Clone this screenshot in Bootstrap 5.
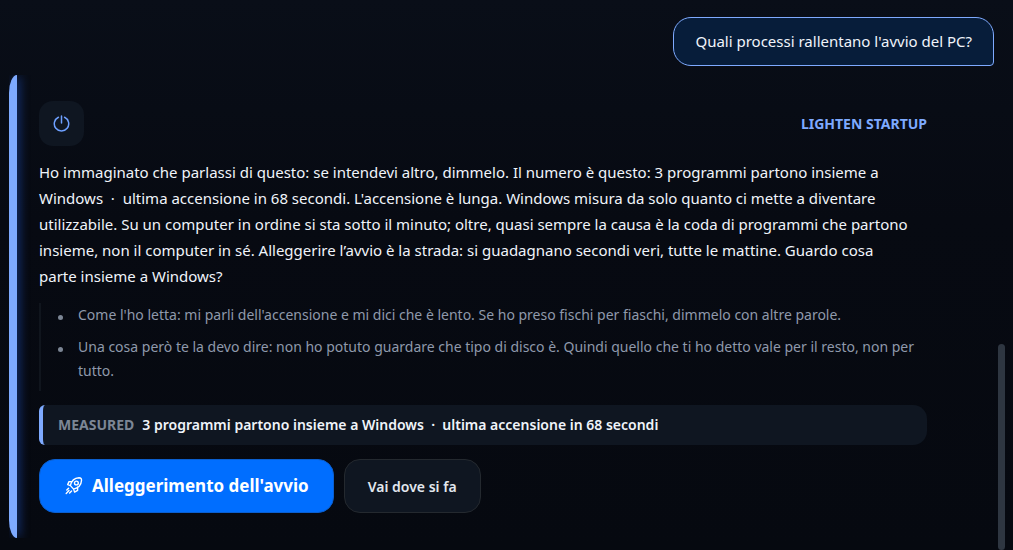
<!DOCTYPE html>
<html lang="it" data-bs-theme="dark">
<head>
<meta charset="utf-8">
<meta name="viewport" content="width=device-width, initial-scale=1">
<title>Assistente PC</title>
<link rel="stylesheet" href="https://cdn.jsdelivr.net/npm/bootstrap@5.3.0/dist/css/bootstrap.min.css">
<style>
  body {
    font-family: "Noto Sans", "Open Sans", sans-serif;
    font-size: 15px;
    color: #f0f4fa;
    background: linear-gradient(#090e18, #070a12 40%, #060910);
    min-height: 100vh;
  }
  .question-row { padding: 17px 19px 0; }
  .question {
    line-height: 23px;
    padding: 12px 21px;
    background: #071d3a;
    border: 1px solid #7eaaff;
    border-radius: 18px 18px 4px 18px;
  }
  .answer {
    padding: 26px 22px 25px 30px;
    margin: 9px 64px 8px 9px;
    position: relative;
  }
  .answer-bar {
    position: absolute;
    inset: 0 auto 0 0;
    width: 8px;
    background: #7eaaff;
    border-radius: 8px 0 0 8px / 18px 0 0 18px;
    box-shadow: 3px 0 10px #143070;
    clip-path: inset(0 -16px 0 0);
  }
  .topic-icon {
    width: 45px;
    height: 45px;
    border-radius: 14px;
    background: #0f1621;
    color: #6ea0ff;
  }
  .topic { font-size: 14px; color: #7eaaff; }
  .reply { line-height: 26px; margin: 13px 0 14px; }
  .notes {
    font-size: 14px;
    line-height: 24px;
    color: #8f99ab;
    border-left: 2px solid #10151d;
    padding-left: 17px;
    margin-bottom: 14px;
  }
  .notes li { display: flex; gap: 15px; padding-bottom: 8px; }
  .notes li::before {
    content: "";
    flex: none;
    width: 5px;
    height: 5px;
    margin-top: 12px;
    border-radius: 50%;
    background: #7c8695;
  }
  .measured {
    font-size: 14px;
    line-height: 24px;
    padding: 8px 15px;
    background: #0f1621;
    border-left: 4px solid #7eaaff;
    border-radius: 6px 14px 14px 6px;
    margin-bottom: 14px;
  }
  .measured-label { color: #7c8695; }
  .actions { gap: 10px; }
  .action {
    height: 54px;
    border-radius: 16px;
    font-family: inherit;
  }
  .action-main {
    --bs-btn-bg: #006eff;
    --bs-btn-border-color: #0b5fcf;
    font-size: 17px;
    padding: 0 24px;
  }
  .action-more {
    --bs-btn-color: #e2e7ee;
    --bs-btn-bg: #0f1621;
    --bs-btn-border-color: #24292f;
    font-size: 14px;
    padding: 0 23px;
  }
  .scroll-thumb {
    position: fixed;
    top: 344px;
    right: 8px;
    bottom: 0;
    width: 7px;
    border-radius: 4px;
    background: #2e3641;
  }
</style>
</head>
<body>
<main>
  <div class="question-row d-flex justify-content-end">
    <div class="question">Quali processi rallentano l'avvio del PC?</div>
  </div>

  <article class="answer">
    <div class="answer-bar"></div>
    <header class="d-flex justify-content-between align-items-center">
      <div class="topic-icon d-flex align-items-center justify-content-center">
        <svg width="17" height="17" viewBox="0 0 17 17" fill="none" stroke="currentColor" stroke-width="1.500" stroke-linecap="round" aria-hidden="true">
          <path d="M5.400 2.300a7.200 7.200 0 1 0 6.200 0M8.500 1v7"/>
        </svg>
      </div>
      <div class="topic fw-bold">LIGHTEN STARTUP</div>
    </header>

    <p class="reply">Ho immaginato che parlassi di questo: se intendevi altro, dimmelo. Il numero è questo: 3 programmi partono insieme a Windows&nbsp; ·&nbsp; ultima accensione in 68 secondi. L'accensione è lunga. Windows misura da solo quanto ci mette a diventare utilizzabile. Su un computer in ordine si sta sotto il minuto; oltre, quasi sempre la causa è la coda di programmi che partono insieme, non il computer in sé. Alleggerire l’avvio è la strada: si guadagnano secondi veri, tutte le mattine. Guardo cosa parte&nbsp;insieme a Windows?</p>

    <ul class="notes list-unstyled">
      <li>Come l'ho letta: mi parli dell'accensione e mi dici che è lento. Se ho preso fischi per fiaschi, dimmelo con altre parole.</li>
      <li>Una cosa però te la devo dire: non ho potuto guardare che tipo di disco è. Quindi quello che ti ho detto vale per il resto, non per tutto.</li>
    </ul>

    <div class="measured d-flex align-items-center">
      <span class="measured-label fw-bold me-2">MEASURED</span>
      <span class="fw-semibold">3 programmi partono insieme a Windows&nbsp; ·&nbsp; ultima accensione in 68 secondi</span>
    </div>

    <div class="actions d-flex flex-wrap">
      <button type="button" class="btn btn-primary action action-main fw-bold d-flex align-items-center gap-2">
        <svg width="20" height="20" viewBox="0 0 20 20" fill="none" stroke="currentColor" stroke-width="1.400" stroke-linecap="round" stroke-linejoin="round" aria-hidden="true">
          <path d="M6.400 9.600C7.400 5 10.500 2 15 1.800c2 0 2.600.8 2.500 2.700-.3 4.500-3.200 7.500-7.900 8.600zM8 5.600 5 5.600 3.700 8.600l2.700 1M13.600 11v3.400l-3 1.700-1-3"/>
          <circle cx="12.400" cy="7" r="1.900"/>
          <path d="M4.600 12.200 2.800 14M7.600 15 5.600 17M5 14.600 2.200 17.400"/>
        </svg>
        <span>Alleggerimento dell'avvio</span>
      </button>
      <button type="button" class="btn btn-secondary action action-more fw-semibold">Vai dove si fa</button>
    </div>
  </article>
</main>
<div class="scroll-thumb"></div>
<script src="https://cdn.jsdelivr.net/npm/bootstrap@5.3.0/dist/js/bootstrap.bundle.min.js"></script>
</body>
</html>
